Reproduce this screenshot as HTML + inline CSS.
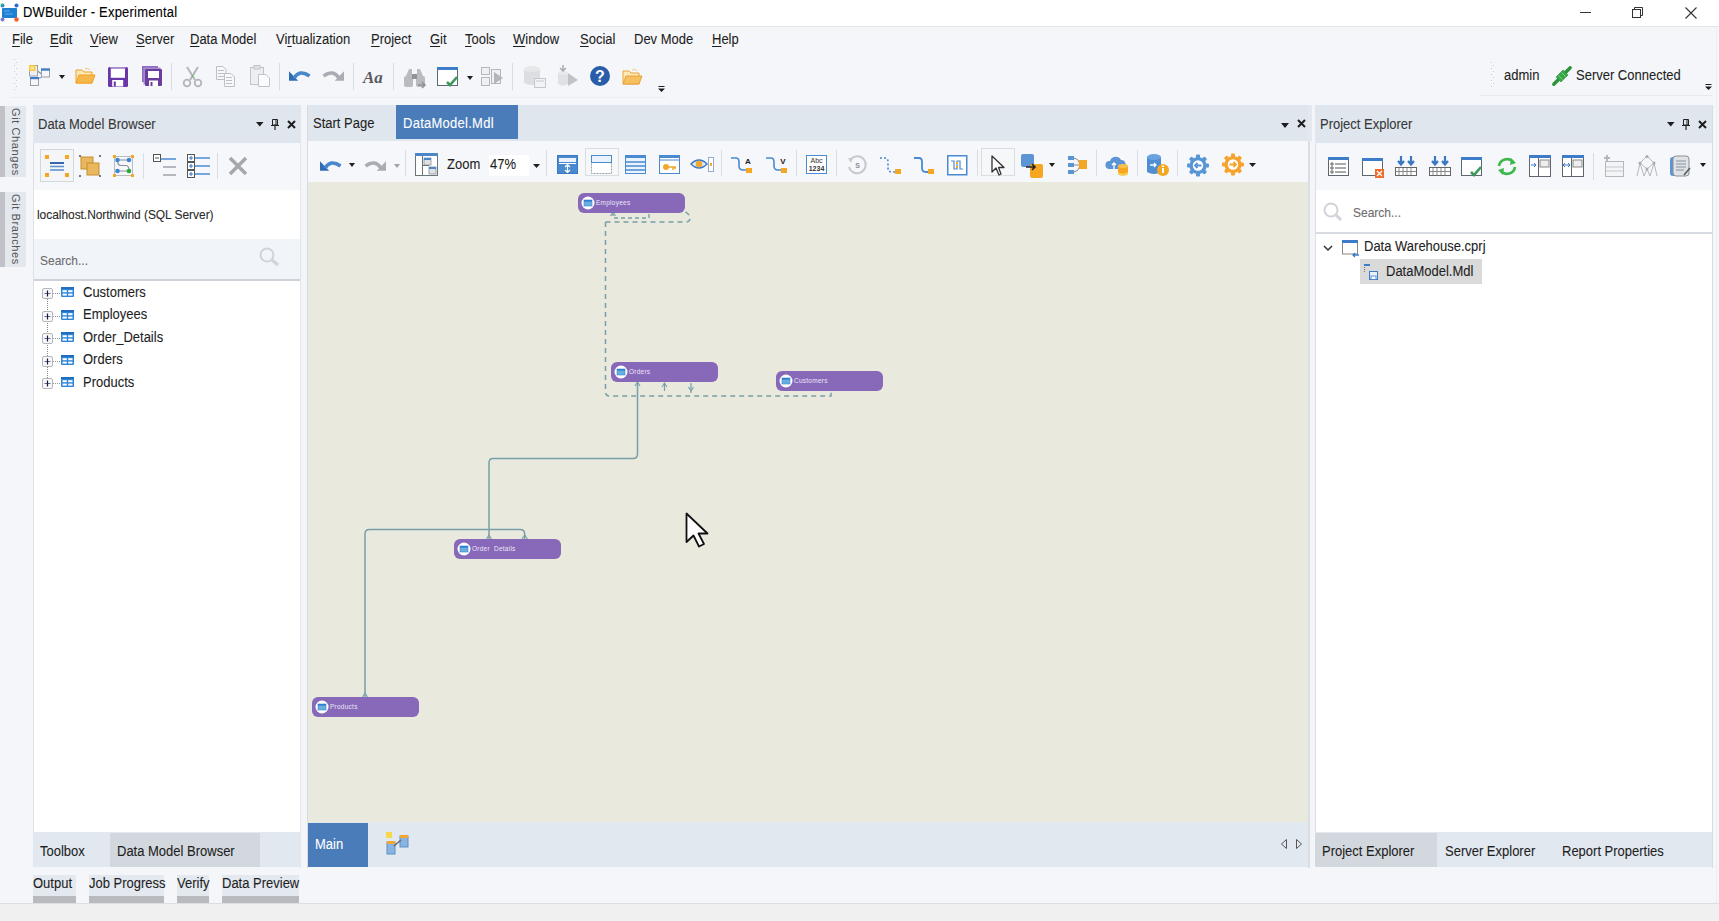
<!DOCTYPE html><html><head><meta charset="utf-8"><style>
html,body{margin:0;padding:0;}
body{width:1719px;height:921px;overflow:hidden;position:relative;background:#f5f6f8;font-family:"Liberation Sans", sans-serif;}
.a{position:absolute;}
.t{position:absolute;white-space:nowrap;line-height:1;-webkit-text-stroke:0.1px currentColor;}
svg{position:absolute;overflow:visible;}
</style></head><body>
<div class="a" style="left:0px;top:0px;width:1719px;height:26px;background:#ffffff;"></div>
<div class="a" style="left:0px;top:26px;width:1719px;height:1px;background:#e3e6ea;"></div>
<svg style="left:0px;top:3px" width="20" height="20" viewBox="0 0 20 20"><rect x="2" y="5" width="15" height="10" rx="1" fill="#1f7fd0"/><path d="M4 8H10M5 11H13" stroke="#5fb0f0" stroke-width="1.2"/><circle cx="2.5" cy="2.5" r="2" fill="#2a8ad8"/><circle cx="2" cy="1.5" r="1" fill="#3c3"/><circle cx="16.5" cy="2.5" r="2" fill="#2a6ad8"/><circle cx="2.5" cy="16.5" r="2" fill="#7a7ad0"/><circle cx="16.5" cy="16.5" r="2.2" fill="#f06030"/></svg>
<div class="t" style="left:23px;top:4.73px;font-size:14.49px;color:#000;transform:scaleX(0.8969);transform-origin:0 0;letter-spacing:0.23px;">DWBuilder - Experimental</div>
<div class="a" style="left:1580px;top:12px;width:11px;height:1px;background:#333;"></div>
<svg style="left:1632px;top:7px" width="12" height="12" viewBox="0 0 12 12"><rect x="0.5" y="2.5" width="8" height="8" fill="none" stroke="#333"/><path d="M2.5 2.5V0.5H10.5V8.5H8.5" fill="none" stroke="#333"/></svg>
<svg style="left:1685px;top:7px" width="12" height="12" viewBox="0 0 12 12"><path d="M0.5 0.5L11.5 11.5M11.5 0.5L0.5 11.5" stroke="#333" stroke-width="1.1"/></svg>
<div class="a" style="left:0px;top:27px;width:1719px;height:75px;background:#f5f6f9;"></div>
<div class="t" style="left:12px;top:31.73px;font-size:14.49px;color:#1e1e1e;transform:scaleX(0.8969);transform-origin:0 0;"><u style="text-decoration-thickness:1px;text-underline-offset:2px">F</u>ile</div>
<div class="t" style="left:50px;top:31.73px;font-size:14.49px;color:#1e1e1e;transform:scaleX(0.8969);transform-origin:0 0;"><u style="text-decoration-thickness:1px;text-underline-offset:2px">E</u>dit</div>
<div class="t" style="left:90px;top:31.73px;font-size:14.49px;color:#1e1e1e;transform:scaleX(0.8969);transform-origin:0 0;"><u style="text-decoration-thickness:1px;text-underline-offset:2px">V</u>iew</div>
<div class="t" style="left:136px;top:31.73px;font-size:14.49px;color:#1e1e1e;transform:scaleX(0.8969);transform-origin:0 0;"><u style="text-decoration-thickness:1px;text-underline-offset:2px">S</u>erver</div>
<div class="t" style="left:190px;top:31.73px;font-size:14.49px;color:#1e1e1e;transform:scaleX(0.8969);transform-origin:0 0;"><u style="text-decoration-thickness:1px;text-underline-offset:2px">D</u>ata Model</div>
<div class="t" style="left:276px;top:31.73px;font-size:14.49px;color:#1e1e1e;transform:scaleX(0.8969);transform-origin:0 0;">Vi<u style="text-decoration-thickness:1px;text-underline-offset:2px">r</u>tualization</div>
<div class="t" style="left:371px;top:31.73px;font-size:14.49px;color:#1e1e1e;transform:scaleX(0.8969);transform-origin:0 0;"><u style="text-decoration-thickness:1px;text-underline-offset:2px">P</u>roject</div>
<div class="t" style="left:430px;top:31.73px;font-size:14.49px;color:#1e1e1e;transform:scaleX(0.8969);transform-origin:0 0;"><u style="text-decoration-thickness:1px;text-underline-offset:2px">G</u>it</div>
<div class="t" style="left:465px;top:31.73px;font-size:14.49px;color:#1e1e1e;transform:scaleX(0.8969);transform-origin:0 0;"><u style="text-decoration-thickness:1px;text-underline-offset:2px">T</u>ools</div>
<div class="t" style="left:513px;top:31.73px;font-size:14.49px;color:#1e1e1e;transform:scaleX(0.8969);transform-origin:0 0;"><u style="text-decoration-thickness:1px;text-underline-offset:2px">W</u>indow</div>
<div class="t" style="left:580px;top:31.73px;font-size:14.49px;color:#1e1e1e;transform:scaleX(0.8969);transform-origin:0 0;"><u style="text-decoration-thickness:1px;text-underline-offset:2px">S</u>ocial</div>
<div class="t" style="left:634px;top:31.73px;font-size:14.49px;color:#1e1e1e;transform:scaleX(0.8969);transform-origin:0 0;">Dev Mode</div>
<div class="t" style="left:712px;top:31.73px;font-size:14.49px;color:#1e1e1e;transform:scaleX(0.8969);transform-origin:0 0;"><u style="text-decoration-thickness:1px;text-underline-offset:2px">H</u>elp</div>
<svg style="left:13px;top:59px" width="6" height="33" viewBox="0 0 6 33"><rect x="1" y="0" width="1" height="1" fill="#c8ccd2"/><rect x="3" y="3" width="1" height="1" fill="#c8ccd2"/><rect x="1" y="6" width="1" height="1" fill="#c8ccd2"/><rect x="3" y="9" width="1" height="1" fill="#c8ccd2"/><rect x="1" y="12" width="1" height="1" fill="#c8ccd2"/><rect x="3" y="15" width="1" height="1" fill="#c8ccd2"/><rect x="1" y="18" width="1" height="1" fill="#c8ccd2"/><rect x="3" y="21" width="1" height="1" fill="#c8ccd2"/><rect x="1" y="24" width="1" height="1" fill="#c8ccd2"/><rect x="3" y="27" width="1" height="1" fill="#c8ccd2"/><rect x="1" y="30" width="1" height="1" fill="#c8ccd2"/></svg>
<svg style="left:29px;top:65px" width="22" height="22" viewBox="0 0 22 22"><path d="M6 4L12.5 9M12.5 12.5L8.5 13.5" stroke="#8a8fa8" stroke-width="1.2"/><rect x="0.5" y="0.5" width="8" height="10.5" fill="#eef0f3" stroke="#9aa0a8"/><rect x="0" y="0" width="6.5" height="6" fill="#f5c842"/><rect x="1.5" y="1.5" width="3.5" height="3" fill="#fbe89a"/><rect x="12.5" y="4" width="8" height="8" fill="#f4f6f9" stroke="#9aa0a8"/><rect x="12" y="3.5" width="9" height="2.2" fill="#3d7cc9"/><rect x="1.5" y="12.5" width="8" height="8" fill="#f4f6f9" stroke="#9aa0a8"/><rect x="1" y="12" width="9" height="2.2" fill="#3d7cc9"/></svg>
<svg style="left:59px;top:75px" width="6" height="4" viewBox="0 0 6 4"><path d="M0 0H6L3.0 4Z" fill="#1e1e1e"/></svg>
<svg style="left:75px;top:67px" width="20" height="18" viewBox="0 0 20 18"><path d="M1 3H7L9 5H17V16H1Z" fill="#fde9b8" stroke="#f0a020" stroke-width="1"/><path d="M10 2Q13 0 15 3" stroke="#f3c77a" fill="none"/><path d="M1 16L4 8H20L17 16Z" fill="#f6b84a" stroke="#f0a020"/></svg>
<svg style="left:108px;top:67px" width="20" height="20" viewBox="0 0 20 20"><rect x="0" y="0" width="20" height="20" rx="1.5" fill="#6b36a6"/><rect x="2" y="0" width="16" height="1" fill="#a58ad0"/><rect x="2.8" y="1.5" width="14.2" height="9.3" fill="#fff"/><rect x="4.2" y="13" width="11" height="6.5" fill="#fff"/><rect x="5.8" y="14.5" width="2" height="5" fill="#6b36a6"/></svg>
<svg style="left:142px;top:66px" width="20" height="20" viewBox="0 0 20 20"><rect x="0" y="0" width="16" height="16" fill="#8e6cc0"/><rect x="1.5" y="1.5" width="17" height="17" fill="#a58ad0"/><rect x="3" y="3" width="17" height="17" rx="1" fill="#6a3d9e"/><rect x="6" y="5" width="11" height="7" fill="#fff"/><rect x="7" y="14.5" width="9" height="5.5" fill="#fff"/><rect x="8.5" y="16" width="2" height="4" fill="#6a3d9e"/></svg>
<div class="a" style="left:171px;top:63px;width:1px;height:27px;background:#d9dce1;"></div>
<svg style="left:182px;top:66px" width="22" height="22" viewBox="0 0 22 22"><path d="M5 1L13 14M16 1L8 14" stroke="#b2b6bb" stroke-width="2" fill="none"/><circle cx="5" cy="17" r="3.3" fill="none" stroke="#b2b6bb" stroke-width="1.8"/><circle cx="16" cy="17" r="3.3" fill="none" stroke="#b2b6bb" stroke-width="1.8"/><circle cx="10.5" cy="10" r="0.8" fill="#3c3"/></svg>
<svg style="left:216px;top:66px" width="20" height="22" viewBox="0 0 20 22"><path d="M0.5 0.5H7L10 3.5V13.5H0.5Z" fill="#f7f8fa" stroke="#bcc0c5"/><path d="M2 4.5H8M2 7.5H8M2 10.5H8" stroke="#bcc0c5"/><path d="M8.5 7.5H15L18.5 11V20.5H8.5Z" fill="#f7f8fa" stroke="#bcc0c5"/><path d="M10 11.5H16M10 14.5H16M10 17.5H16" stroke="#bcc0c5"/></svg>
<svg style="left:250px;top:65px" width="20" height="22" viewBox="0 0 20 22"><rect x="0.5" y="2.5" width="13" height="17" fill="#eceef1" stroke="#c0c4c8"/><rect x="4" y="0.5" width="6" height="3.5" fill="#dfe2e6" stroke="#c0c4c8"/><path d="M8.5 9.5H16L19.5 13V21.5H8.5Z" fill="#fafbfc" stroke="#c0c4c8"/></svg>
<div class="a" style="left:279px;top:63px;width:1px;height:27px;background:#d9dce1;"></div>
<svg style="left:288px;top:67px" width="22" height="15" viewBox="0 0 22 15"><path d="M1 4.2V13.8H10.2Z" fill="#2f6db5"/><path d="M6 11Q12 2 21.5 9" fill="none" stroke="#4a86cc" stroke-width="3.6"/></svg>
<svg style="left:323px;top:67px" width="22" height="15" viewBox="0 0 22 15"><g transform="translate(22,0) scale(-1,1)"><path d="M1 4.2V13.8H10.2Z" fill="#a9adb3"/><path d="M6 11Q12 2 21.5 9" fill="none" stroke="#a9adb3" stroke-width="3.6"/></g></svg>
<div class="a" style="left:353px;top:63px;width:1px;height:27px;background:#d9dce1;"></div>
<svg style="left:363px;top:70px" width="24" height="16" viewBox="0 0 24 16"><text x="0" y="13" font-family="Liberation Serif" font-style="italic" font-weight="bold" font-size="17" fill="#5a5a62">Aa</text></svg>
<div class="a" style="left:393px;top:63px;width:1px;height:27px;background:#d9dce1;"></div>
<svg style="left:404px;top:68px" width="21" height="20" viewBox="0 0 21 20"><path d="M2 8L5 1H8V10Z" fill="#b8bbc0"/><path d="M19 8L16 1H13V10Z" fill="#b8bbc0"/><rect x="0" y="8" width="9" height="11" rx="2" fill="#b8bbc0"/><rect x="12" y="8" width="9" height="11" rx="2" fill="#b8bbc0"/><rect x="8" y="6" width="5" height="5" fill="#8f9398"/><path d="M14 17H21M18 14L21 17L18 20" stroke="#8f9398" stroke-width="1.5" fill="none"/></svg>
<svg style="left:437px;top:67px" width="21" height="20" viewBox="0 0 21 20"><rect x="0.5" y="0.5" width="20" height="18" fill="#fff" stroke="#5f6670"/><rect x="0" y="0" width="21" height="3" fill="#3d7cc9"/><path d="M10 15L13 18L20 10" stroke="#3a9a5a" stroke-width="2.6" fill="none"/></svg>
<svg style="left:467px;top:76px" width="6" height="4" viewBox="0 0 6 4"><path d="M0 0H6L3.0 4Z" fill="#1e1e1e"/></svg>
<svg style="left:481px;top:67px" width="22" height="20" viewBox="0 0 22 20"><rect x="0.5" y="0.5" width="8" height="7" fill="#eef0f3" stroke="#b3b7bc"/><rect x="0.5" y="10.5" width="8" height="8" fill="#eef0f3" stroke="#b3b7bc"/><rect x="10.5" y="2.5" width="9" height="14" fill="#eef0f3" stroke="#b3b7bc"/><path d="M13 5L22 11L13 17Z" fill="#b3b7bc"/></svg>
<div class="a" style="left:512px;top:63px;width:1px;height:27px;background:#d9dce1;"></div>
<svg style="left:524px;top:66px" width="22" height="22" viewBox="0 0 22 22"><path d="M0 3V17Q8 21 16 17V3Z" fill="#dcdee1"/><ellipse cx="8" cy="3" rx="8" ry="3" fill="#e6e8ea"/><rect x="10.5" y="12.5" width="11" height="9" fill="#f2f3f5" stroke="#c4c7cb"/><path d="M12 15H20" stroke="#c4c7cb"/></svg>
<svg style="left:557px;top:65px" width="22" height="22" viewBox="0 0 22 22"><path d="M1 8V19Q6 22 11 19V8Z" fill="#dfe1e4"/><ellipse cx="6" cy="8" rx="5" ry="2" fill="#e8e9eb"/><path d="M6 0V6M3 3L6 6L9 3" stroke="#a7abb0" stroke-width="1.5" fill="none"/><path d="M11 8L21 15L11 21Z" fill="#bfc2c6"/></svg>
<svg style="left:590px;top:66px" width="20" height="20" viewBox="0 0 20 20"><circle cx="10" cy="10" r="10" fill="#2a5da8"/><text x="10" y="16" text-anchor="middle" font-family="Liberation Sans" font-weight="bold" font-size="16" fill="#fff">?</text></svg>
<svg style="left:622px;top:68px" width="22" height="17" viewBox="0 0 22 17"><path d="M1 3H7L9 5H17V16H1Z" fill="#fde9b8" stroke="#eaa23a" stroke-width="1"/><path d="M10 2Q13 0 15 3" stroke="#f3c77a" fill="none"/><path d="M1 16L4 8H20L17 16Z" fill="#f6c060" stroke="#eaa23a"/></svg>
<svg style="left:658px;top:86px" width="7" height="6" viewBox="0 0 7 6"><path d="M0.5 0.5H6.5" stroke="#1e1e1e" stroke-width="1"/><path d="M0 2.5H7L3.5 6Z" fill="#1e1e1e"/></svg>
<div class="a" style="left:10px;top:97px;width:656px;height:1px;background:#eaedf1;"></div>
<svg style="left:1490px;top:62px" width="6" height="28" viewBox="0 0 6 28"><rect x="1" y="0" width="1" height="1" fill="#c8ccd2"/><rect x="3" y="3" width="1" height="1" fill="#c8ccd2"/><rect x="1" y="6" width="1" height="1" fill="#c8ccd2"/><rect x="3" y="9" width="1" height="1" fill="#c8ccd2"/><rect x="1" y="12" width="1" height="1" fill="#c8ccd2"/><rect x="3" y="15" width="1" height="1" fill="#c8ccd2"/><rect x="1" y="18" width="1" height="1" fill="#c8ccd2"/><rect x="3" y="21" width="1" height="1" fill="#c8ccd2"/><rect x="1" y="24" width="1" height="1" fill="#c8ccd2"/></svg>
<div class="t" style="left:1504px;top:67.73px;font-size:14.49px;color:#1e1e1e;transform:scaleX(0.8969);transform-origin:0 0;">admin</div>
<svg style="left:1552px;top:66px" width="20" height="20" viewBox="0 0 20 20"><path d="M1.8 18.2L18.2 1.8" stroke="#2c9438" stroke-width="3.4" stroke-linecap="round"/><path d="M11.1 3.9L16 8.9L8.9 16L4 11.1Z" fill="#3aa846" stroke="#2a8a35" stroke-width="0.6"/><path d="M6.5 9.5L10.5 13.5M9.5 6.5L13.5 10.5" stroke="#7fd08a" stroke-width="0.9"/></svg>
<div class="t" style="left:1576px;top:67.73px;font-size:14.49px;color:#1e1e1e;transform:scaleX(0.8969);transform-origin:0 0;">Server Connected</div>
<svg style="left:1705px;top:84px" width="7" height="6" viewBox="0 0 7 6"><path d="M0.5 0.5H6.5" stroke="#1e1e1e" stroke-width="1"/><path d="M0 2.5H7L3.5 6Z" fill="#1e1e1e"/></svg>
<div class="a" style="left:1480px;top:95px;width:232px;height:1px;background:#e6e9ed;"></div>
<div class="a" style="left:0px;top:102px;width:1719px;height:801px;background:#f5f6f9;"></div>
<div class="a" style="left:0px;top:106px;width:5px;height:71px;background:#c0c2c7;"></div>
<div class="a" style="left:5px;top:106px;width:21px;height:71px;background:#e3e8ef;"></div>
<div class="a" style="left:0px;top:192px;width:5px;height:75px;background:#c0c2c7;"></div>
<div class="a" style="left:5px;top:192px;width:21px;height:75px;background:#e3e8ef;"></div>
<div class="t" style="left:10px;top:107.50px;font-size:11.00px;color:#555;writing-mode:vertical-rl;-webkit-text-stroke:0;letter-spacing:0.6px;">Git Changes</div>
<div class="t" style="left:10px;top:193.50px;font-size:11.00px;color:#555;writing-mode:vertical-rl;-webkit-text-stroke:0;letter-spacing:0.6px;">Git Branches</div>
<div class="a" style="left:33px;top:105px;width:267px;height:38px;background:#e0e6ee;"></div>
<div class="t" style="left:38px;top:116.73px;font-size:14.49px;color:#383838;transform:scaleX(0.8969);transform-origin:0 0;-webkit-text-stroke:0.1px currentColor;">Data Model Browser</div>
<svg style="left:255.5px;top:122px" width="8" height="5" viewBox="0 0 8 5"><path d="M0 0H7.5L3.75 4.5Z" fill="#1e1e1e"/></svg>
<svg style="left:271px;top:118.5px" width="8" height="12" viewBox="0 0 8 12"><path d="M1.5 0.5H6.5V6H1.5Z" fill="none" stroke="#222"/><path d="M0 6.5H8M4 7V11" stroke="#222" stroke-width="1.2"/><path d="M5 1V6" stroke="#222"/></svg>
<svg style="left:287px;top:120px" width="9" height="9" viewBox="0 0 9 9"><path d="M1 1L8 8M8 1L1 8" stroke="#1e1e1e" stroke-width="2"/></svg>
<div class="a" style="left:33px;top:143px;width:267px;height:47px;background:#f5f7fa;"></div>
<div class="a" style="left:40px;top:149px;width:34px;height:33px;background:#f3f5f7;border:1px solid #d3d7dc;box-sizing:border-box;"></div>
<svg style="left:45px;top:155px" width="24" height="22" viewBox="0 0 24 22"><rect x="0" y="0" width="4" height="4" fill="#f5a623"/><rect x="20" y="0" width="4" height="4" fill="#f5a623"/><rect x="0" y="18" width="4" height="4" fill="#f5a623"/><rect x="20" y="18" width="4" height="4" fill="#f5a623"/><path d="M5 8H19" stroke="#3a66b0" stroke-width="2"/><path d="M5 11.5H19M5 15H19" stroke="#5a8fd0" stroke-width="1.5"/></svg>
<svg style="left:80px;top:156px" width="20" height="20" viewBox="0 0 20 20"><rect x="1" y="1" width="12" height="12" fill="#e9b760" stroke="#c98f2a"/><rect x="7" y="7" width="12" height="12" fill="#e9b760" stroke="#c98f2a"/><rect x="-1" y="-1" width="2" height="2" fill="#777"/><rect x="19" y="-1" width="2" height="2" fill="#777"/><rect x="-1" y="19" width="2" height="2" fill="#777"/><rect x="19" y="19" width="2" height="2" fill="#777"/></svg>
<svg style="left:113px;top:155px" width="21" height="22" viewBox="0 0 21 22"><rect x="1.5" y="1.5" width="18" height="19" fill="none" stroke="#b9bcc2"/><rect x="0" y="0" width="3" height="3" fill="#f5a623"/><rect x="18" y="0" width="3" height="3" fill="#f5a623"/><rect x="0" y="19" width="3" height="3" fill="#f5a623"/><rect x="18" y="19" width="3" height="3" fill="#f5a623"/><path d="M5 5H16M4.5 5Q4.5 10.5 8 10.5H13Q16 10.5 16 16M5 16H16" stroke="#8a8f96" stroke-width="1.2" fill="none"/><circle cx="4.5" cy="5" r="2.3" fill="#3d86d6"/><circle cx="16" cy="5" r="2.3" fill="#3d86d6"/><circle cx="4.5" cy="16" r="2.3" fill="#3d86d6"/><circle cx="16" cy="16" r="2.3" fill="#2fa33f"/></svg>
<div class="a" style="left:143px;top:153px;width:1px;height:26px;background:#d9dce1;"></div>
<svg style="left:153px;top:154px" width="24" height="24" viewBox="0 0 24 24"><rect x="0.5" y="0.5" width="7" height="7" fill="#fff" stroke="#555"/><path d="M2 4H6" stroke="#555"/><path d="M8 5H23" stroke="#4a8ad0" stroke-width="1.5"/><path d="M10 13H23M10 21H23" stroke="#a0a4aa" stroke-width="1.5"/></svg>
<svg style="left:187px;top:154px" width="24" height="24" viewBox="0 0 24 24"><rect x="0.5" y="0.5" width="7" height="7" fill="#fff" stroke="#555"/><path d="M2 4H6M4 2V6" stroke="#3a70c0"/><path d="M8 4H23" stroke="#4a8ad0" stroke-width="1.5"/><rect x="0.5" y="8.5" width="7" height="7" fill="#fff" stroke="#555"/><path d="M2 12H6M4 10V14" stroke="#3a70c0"/><path d="M8 12H23" stroke="#4a8ad0" stroke-width="1.5"/><rect x="0.5" y="16.5" width="7" height="7" fill="#fff" stroke="#555"/><path d="M2 20H6M4 18V22" stroke="#3a70c0"/><path d="M8 20H23" stroke="#4a8ad0" stroke-width="1.5"/></svg>
<div class="a" style="left:217px;top:153px;width:1px;height:26px;background:#d9dce1;"></div>
<svg style="left:228px;top:156px" width="20" height="20" viewBox="0 0 20 20"><path d="M2 2L18 18M18 2L2 18" stroke="#a4a7ab" stroke-width="3.5"/></svg>
<div class="a" style="left:33px;top:190px;width:267px;height:50px;background:#ffffff;"></div>
<div class="t" style="left:37px;top:207.83px;font-size:13.38px;color:#2a2a2a;transform:scaleX(0.8969);transform-origin:0 0;letter-spacing:-0.06px;">localhost.Northwind (SQL Server)</div>
<div class="a" style="left:33px;top:239px;width:267px;height:40px;background:#f1f4f8;"></div>
<div class="t" style="left:40px;top:253.83px;font-size:13.38px;color:#6d6d6d;transform:scaleX(0.8969);transform-origin:0 0;">Search...</div>
<svg style="left:259px;top:247px" width="24" height="20" viewBox="0 0 24 20"><circle cx="8" cy="8" r="6.5" fill="none" stroke="#d0d3d7" stroke-width="2"/><path d="M13 13L19 18" stroke="#d0d3d7" stroke-width="3"/></svg>
<div class="a" style="left:33px;top:279px;width:267px;height:2px;background:#cfd3d9;"></div>
<div class="a" style="left:33px;top:281px;width:267px;height:551px;background:#ffffff;"></div>
<svg style="left:47px;top:299px" width="1" height="90" viewBox="0 0 1 90"><path d="M0.5 0V90" stroke="#888" stroke-dasharray="1 1"/></svg>
<svg style="left:42px;top:288.3px" width="11" height="11" viewBox="0 0 11 11"><rect x="0.5" y="0.5" width="10" height="10" rx="1.5" fill="#f8f8fa" stroke="#b4b6ba"/><path d="M2.5 5.5H8.5" stroke="#5a6a9a"/><path d="M5.5 2.5V8.5" stroke="#1a1a3a" stroke-width="1.2"/></svg>
<svg style="left:53px;top:293.3px" width="8" height="1" viewBox="0 0 8 1"><path d="M0 0.5H8" stroke="#999" stroke-dasharray="1 1"/></svg>
<svg style="left:61px;top:287.3px" width="13" height="10" viewBox="0 0 13 10"><rect x="0" y="0" width="13" height="10" rx="1" fill="#2f86d6"/><rect x="0" y="0" width="13" height="2" fill="#1f6ec0"/><rect x="1.5" y="3.2" width="4.3" height="2" fill="#fff"/><rect x="7.2" y="3.2" width="4.3" height="2" fill="#fff"/><rect x="1.5" y="6.6" width="4.3" height="2" fill="#fff"/><rect x="7.2" y="6.6" width="4.3" height="2" fill="#fff"/></svg>
<div class="t" style="left:83px;top:285.03px;font-size:14.49px;color:#1e1e1e;transform:scaleX(0.8969);transform-origin:0 0;">Customers</div>
<svg style="left:42px;top:310.75px" width="11" height="11" viewBox="0 0 11 11"><rect x="0.5" y="0.5" width="10" height="10" rx="1.5" fill="#f8f8fa" stroke="#b4b6ba"/><path d="M2.5 5.5H8.5" stroke="#5a6a9a"/><path d="M5.5 2.5V8.5" stroke="#1a1a3a" stroke-width="1.2"/></svg>
<svg style="left:53px;top:315.75px" width="8" height="1" viewBox="0 0 8 1"><path d="M0 0.5H8" stroke="#999" stroke-dasharray="1 1"/></svg>
<svg style="left:61px;top:309.75px" width="13" height="10" viewBox="0 0 13 10"><rect x="0" y="0" width="13" height="10" rx="1" fill="#2f86d6"/><rect x="0" y="0" width="13" height="2" fill="#1f6ec0"/><rect x="1.5" y="3.2" width="4.3" height="2" fill="#fff"/><rect x="7.2" y="3.2" width="4.3" height="2" fill="#fff"/><rect x="1.5" y="6.6" width="4.3" height="2" fill="#fff"/><rect x="7.2" y="6.6" width="4.3" height="2" fill="#fff"/></svg>
<div class="t" style="left:83px;top:307.48px;font-size:14.49px;color:#1e1e1e;transform:scaleX(0.8969);transform-origin:0 0;">Employees</div>
<svg style="left:42px;top:333.2px" width="11" height="11" viewBox="0 0 11 11"><rect x="0.5" y="0.5" width="10" height="10" rx="1.5" fill="#f8f8fa" stroke="#b4b6ba"/><path d="M2.5 5.5H8.5" stroke="#5a6a9a"/><path d="M5.5 2.5V8.5" stroke="#1a1a3a" stroke-width="1.2"/></svg>
<svg style="left:53px;top:338.2px" width="8" height="1" viewBox="0 0 8 1"><path d="M0 0.5H8" stroke="#999" stroke-dasharray="1 1"/></svg>
<svg style="left:61px;top:332.2px" width="13" height="10" viewBox="0 0 13 10"><rect x="0" y="0" width="13" height="10" rx="1" fill="#2f86d6"/><rect x="0" y="0" width="13" height="2" fill="#1f6ec0"/><rect x="1.5" y="3.2" width="4.3" height="2" fill="#fff"/><rect x="7.2" y="3.2" width="4.3" height="2" fill="#fff"/><rect x="1.5" y="6.6" width="4.3" height="2" fill="#fff"/><rect x="7.2" y="6.6" width="4.3" height="2" fill="#fff"/></svg>
<div class="t" style="left:83px;top:329.93px;font-size:14.49px;color:#1e1e1e;transform:scaleX(0.8969);transform-origin:0 0;">Order_Details</div>
<svg style="left:42px;top:355.65px" width="11" height="11" viewBox="0 0 11 11"><rect x="0.5" y="0.5" width="10" height="10" rx="1.5" fill="#f8f8fa" stroke="#b4b6ba"/><path d="M2.5 5.5H8.5" stroke="#5a6a9a"/><path d="M5.5 2.5V8.5" stroke="#1a1a3a" stroke-width="1.2"/></svg>
<svg style="left:53px;top:360.65px" width="8" height="1" viewBox="0 0 8 1"><path d="M0 0.5H8" stroke="#999" stroke-dasharray="1 1"/></svg>
<svg style="left:61px;top:354.65px" width="13" height="10" viewBox="0 0 13 10"><rect x="0" y="0" width="13" height="10" rx="1" fill="#2f86d6"/><rect x="0" y="0" width="13" height="2" fill="#1f6ec0"/><rect x="1.5" y="3.2" width="4.3" height="2" fill="#fff"/><rect x="7.2" y="3.2" width="4.3" height="2" fill="#fff"/><rect x="1.5" y="6.6" width="4.3" height="2" fill="#fff"/><rect x="7.2" y="6.6" width="4.3" height="2" fill="#fff"/></svg>
<div class="t" style="left:83px;top:352.38px;font-size:14.49px;color:#1e1e1e;transform:scaleX(0.8969);transform-origin:0 0;">Orders</div>
<svg style="left:42px;top:378.1px" width="11" height="11" viewBox="0 0 11 11"><rect x="0.5" y="0.5" width="10" height="10" rx="1.5" fill="#f8f8fa" stroke="#b4b6ba"/><path d="M2.5 5.5H8.5" stroke="#5a6a9a"/><path d="M5.5 2.5V8.5" stroke="#1a1a3a" stroke-width="1.2"/></svg>
<svg style="left:53px;top:383.1px" width="8" height="1" viewBox="0 0 8 1"><path d="M0 0.5H8" stroke="#999" stroke-dasharray="1 1"/></svg>
<svg style="left:61px;top:377.1px" width="13" height="10" viewBox="0 0 13 10"><rect x="0" y="0" width="13" height="10" rx="1" fill="#2f86d6"/><rect x="0" y="0" width="13" height="2" fill="#1f6ec0"/><rect x="1.5" y="3.2" width="4.3" height="2" fill="#fff"/><rect x="7.2" y="3.2" width="4.3" height="2" fill="#fff"/><rect x="1.5" y="6.6" width="4.3" height="2" fill="#fff"/><rect x="7.2" y="6.6" width="4.3" height="2" fill="#fff"/></svg>
<div class="t" style="left:83px;top:374.83px;font-size:14.49px;color:#1e1e1e;transform:scaleX(0.8969);transform-origin:0 0;">Products</div>
<div class="a" style="left:33px;top:143px;width:1px;height:689px;background:#dde1e6;"></div>
<div class="a" style="left:33px;top:832px;width:267px;height:35px;background:#e2e8f0;"></div>
<div class="a" style="left:110px;top:833px;width:150px;height:34px;background:#d3d8de;"></div>
<div class="t" style="left:40px;top:843.73px;font-size:14.49px;color:#1e1e1e;transform:scaleX(0.8969);transform-origin:0 0;">Toolbox</div>
<div class="t" style="left:117px;top:843.73px;font-size:14.49px;color:#1e1e1e;transform:scaleX(0.8969);transform-origin:0 0;">Data Model Browser</div>
<div class="a" style="left:33px;top:875px;width:43px;height:21px;background:#e4e9ef;"></div>
<div class="a" style="left:33px;top:896px;width:43px;height:7px;background:#b8babf;"></div>
<div class="t" style="left:33px;top:875.73px;font-size:14.49px;color:#1e1e1e;transform:scaleX(0.8969);transform-origin:0 0;">Output</div>
<div class="a" style="left:89px;top:875px;width:75px;height:21px;background:#e4e9ef;"></div>
<div class="a" style="left:89px;top:896px;width:75px;height:7px;background:#b8babf;"></div>
<div class="t" style="left:89px;top:875.73px;font-size:14.49px;color:#1e1e1e;transform:scaleX(0.8969);transform-origin:0 0;">Job Progress</div>
<div class="a" style="left:177px;top:875px;width:32px;height:21px;background:#e4e9ef;"></div>
<div class="a" style="left:177px;top:896px;width:32px;height:7px;background:#b8babf;"></div>
<div class="t" style="left:177px;top:875.73px;font-size:14.49px;color:#1e1e1e;transform:scaleX(0.8969);transform-origin:0 0;">Verify</div>
<div class="a" style="left:222px;top:875px;width:77px;height:21px;background:#e4e9ef;"></div>
<div class="a" style="left:222px;top:896px;width:77px;height:7px;background:#b8babf;"></div>
<div class="t" style="left:222px;top:875.73px;font-size:14.49px;color:#1e1e1e;transform:scaleX(0.8969);transform-origin:0 0;">Data Preview</div>
<div class="a" style="left:0px;top:903px;width:1719px;height:18px;background:#f0f0f0;"></div>
<div class="a" style="left:0px;top:903px;width:1719px;height:1px;background:#dedede;"></div>
<div class="a" style="left:300px;top:105px;width:8px;height:763px;background:#f3f5f8;"></div>
<div class="a" style="left:300px;top:105px;width:1px;height:763px;background:#e1e5ea;"></div>
<div class="a" style="left:307px;top:105px;width:1px;height:763px;background:#d6dade;"></div>
<div class="a" style="left:308px;top:105px;width:1000px;height:36px;background:#e0e6ee;"></div>
<div class="t" style="left:313px;top:115.73px;font-size:14.49px;color:#1e1e1e;transform:scaleX(0.8969);transform-origin:0 0;">Start Page</div>
<div class="a" style="left:396px;top:105px;width:122px;height:34px;background:#4a7cba;"></div>
<div class="t" style="left:403px;top:115.73px;font-size:14.49px;color:#ffffff;transform:scaleX(0.8969);transform-origin:0 0;letter-spacing:0.3px;">DataModel.Mdl</div>
<svg style="left:1281px;top:123px" width="8" height="5" viewBox="0 0 8 5"><path d="M0 0H8L4.0 5Z" fill="#1e1e1e"/></svg>
<svg style="left:1297px;top:119px" width="9" height="9" viewBox="0 0 9 9"><path d="M1 1L8 8M8 1L1 8" stroke="#1e1e1e" stroke-width="2"/></svg>
<div class="a" style="left:308px;top:141px;width:1000px;height:41px;background:#f5f7fa;"></div>
<svg style="left:319px;top:157px" width="22" height="14" viewBox="0 0 22 14"><path d="M1 4.2V13.8H10.2Z" fill="#2f6db5"/><path d="M6 11Q12 2 21.5 9" fill="none" stroke="#4a86cc" stroke-width="3.6"/></svg>
<svg style="left:349px;top:163px" width="6" height="4" viewBox="0 0 6 4"><path d="M0 0H6L3.0 4Z" fill="#1e1e1e"/></svg>
<svg style="left:365px;top:157px" width="22" height="14" viewBox="0 0 22 14"><g transform="translate(22,0) scale(-1,1)"><path d="M1 4.2V13.8H10.2Z" fill="#a9adb3"/><path d="M6 11Q12 2 21.5 9" fill="none" stroke="#a9adb3" stroke-width="3.6"/></g></svg>
<svg style="left:394px;top:164px" width="6" height="4" viewBox="0 0 6 4"><path d="M0 0H6L3.0 4Z" fill="#a0a4aa"/></svg>
<div class="a" style="left:405px;top:150px;width:1px;height:26px;background:#d9dce1;"></div>
<svg style="left:415px;top:153px" width="23" height="23" viewBox="0 0 23 23"><rect x="0.5" y="0.5" width="22" height="22" fill="#fff" stroke="#6e747c"/><rect x="0" y="0" width="23" height="3" fill="#4c86c8"/><path d="M7.5 3V23" stroke="#6e747c"/><rect x="9" y="5" width="7" height="7" fill="#dfe3e8" stroke="#8a8f96" stroke-width="0.8"/><rect x="9" y="5" width="7" height="2" fill="#4c86c8"/><rect x="14" y="14" width="7" height="7" fill="#dfe3e8" stroke="#8a8f96" stroke-width="0.8"/><rect x="14" y="14" width="7" height="2" fill="#4c86c8"/><path d="M7.5 12.5H14" stroke="#6e747c"/></svg>
<div class="t" style="left:447px;top:156.73px;font-size:14.49px;color:#1e1e1e;transform:scaleX(0.8969);transform-origin:0 0;">Zoom</div>
<div class="a" style="left:489px;top:155px;width:40px;height:21px;background:#ffffff;"></div>
<div class="t" style="left:490px;top:156.73px;font-size:14.49px;color:#1e1e1e;transform:scaleX(0.8969);transform-origin:0 0;">47%</div>
<svg style="left:533px;top:164px" width="7" height="4" viewBox="0 0 7 4"><path d="M0 0H7L3.5 4Z" fill="#1e1e1e"/></svg>
<div class="a" style="left:546px;top:150px;width:1px;height:26px;background:#d9dce1;"></div>
<svg style="left:557px;top:155px" width="21" height="19" viewBox="0 0 21 19"><rect x="0.5" y="0.5" width="20" height="18" fill="#4a8ad0" stroke="#3b78c2"/><rect x="2" y="3" width="17" height="4" fill="#eaf2fb"/><path d="M2 8.5H19" stroke="#fff"/><path d="M10.5 10V17M8 12L10.5 9.5L13 12M8 15L10.5 17.5L13 15" stroke="#fff" stroke-width="1.2" fill="none"/></svg>
<div class="a" style="left:585px;top:148px;width:34px;height:28px;background:#f6f7f9;border:1px solid #dadde2;box-sizing:border-box;"></div>
<svg style="left:591px;top:155px" width="21" height="19" viewBox="0 0 21 19"><rect x="0.5" y="0.5" width="20" height="18" fill="#fff" stroke="#9aa0a6" stroke-dasharray="2 1"/><rect x="0.5" y="0.5" width="20" height="7" fill="#eaf2fb" stroke="#4a8ad0"/></svg>
<svg style="left:625px;top:155px" width="21" height="19" viewBox="0 0 21 19"><rect x="0.5" y="0.5" width="20" height="18" fill="#eaf2fb" stroke="#4a8ad0"/><rect x="0" y="0" width="21" height="3" fill="#4a8ad0"/><path d="M1 7H20M1 11H20M1 15H20" stroke="#4a8ad0" stroke-width="1.5"/></svg>
<svg style="left:659px;top:155px" width="21" height="19" viewBox="0 0 21 19"><rect x="0.5" y="0.5" width="20" height="18" fill="#fff" stroke="#4a8ad0"/><rect x="0" y="0" width="21" height="3" fill="#4a8ad0"/><path d="M1 5H20" stroke="#4a8ad0"/><circle cx="7" cy="12" r="3" fill="#f0a830"/><path d="M9 12H17M14 12V15M16 12V14" stroke="#f0a830" stroke-width="1.5"/></svg>
<svg style="left:691px;top:157px" width="23" height="15" viewBox="0 0 23 15"><path d="M0 7Q8 -1 16 7Q8 15 0 7Z" fill="#dfeaf7" stroke="#3b78c2" stroke-width="1.5"/><circle cx="8" cy="7" r="3.3" fill="#f0a830"/><rect x="17.5" y="0.5" width="5" height="14" fill="#fff" stroke="#9ac"/><rect x="19" y="6" width="2" height="3" fill="#f0a830"/></svg>
<div class="a" style="left:721px;top:150px;width:1px;height:26px;background:#d9dce1;"></div>
<svg style="left:731px;top:156px" width="22" height="18" viewBox="0 0 22 18"><path d="M0 2H5Q8 2 8 6V10Q8 14 12 14H17" stroke="#4a8ad0" stroke-width="1.6" fill="none"/><rect x="15" y="12" width="6" height="5" fill="#f5a623"/><text x="17" y="8" text-anchor="middle" font-family="Liberation Sans" font-weight="bold" font-size="8" fill="#222">A</text></svg>
<svg style="left:766px;top:156px" width="22" height="18" viewBox="0 0 22 18"><path d="M0 2H5Q8 2 8 6V10Q8 14 12 14H17" stroke="#4a8ad0" stroke-width="1.6" fill="none"/><rect x="15" y="12" width="6" height="5" fill="#f5a623"/><text x="17" y="8" text-anchor="middle" font-family="Liberation Sans" font-weight="bold" font-size="8" fill="#222">V</text></svg>
<div class="a" style="left:796px;top:150px;width:1px;height:26px;background:#d9dce1;"></div>
<svg style="left:806px;top:155px" width="21" height="19" viewBox="0 0 21 19"><rect x="0.5" y="0.5" width="20" height="18" fill="#fff" stroke="#4a8ad0"/><text x="10.5" y="8" text-anchor="middle" font-family="Liberation Sans" font-size="7" fill="#333">Abc</text><text x="10.5" y="15.5" text-anchor="middle" font-family="Liberation Sans" font-weight="bold" font-size="7" fill="#333">1234</text></svg>
<div class="a" style="left:836px;top:150px;width:1px;height:26px;background:#d9dce1;"></div>
<svg style="left:847px;top:155px" width="21" height="20" viewBox="0 0 21 20"><path d="M4 4A8.5 8.5 0 1 1 2 12" stroke="#c6c9cd" stroke-width="2" fill="none"/><path d="M1 3L6 3L4 8Z" fill="#c6c9cd"/><text x="10.5" y="13" text-anchor="middle" font-family="Liberation Sans" font-size="7" font-weight="bold" fill="#8a8e93">S</text></svg>
<svg style="left:880px;top:157px" width="21" height="18" viewBox="0 0 21 18"><path d="M0 1H5Q8 1 8 5V11Q8 15 12 15H17" stroke="#4a8ad0" stroke-width="1.6" stroke-dasharray="2 2" fill="none"/><rect x="15" y="12" width="6" height="5" fill="#f5a623"/></svg>
<svg style="left:914px;top:157px" width="21" height="18" viewBox="0 0 21 18"><path d="M0 1H5Q8 1 8 5V11Q8 15 12 15H17" stroke="#4a8ad0" stroke-width="1.8" fill="none"/><rect x="14" y="12" width="6" height="5" fill="#f5a623"/></svg>
<svg style="left:947px;top:155px" width="21" height="21" viewBox="0 0 21 21"><rect x="0.75" y="0.75" width="19" height="19" fill="#fff" stroke="#4a8ad0" stroke-width="1.5"/><path d="M4 6H7V14H10V6H13V14H16" stroke="#4a8ad0" stroke-width="1.2" fill="none"/><rect x="9" y="7" width="2" height="2" fill="#f5a623"/><rect x="9" y="11" width="2" height="2" fill="#f5a623"/></svg>
<div class="a" style="left:977px;top:150px;width:1px;height:26px;background:#d9dce1;"></div>
<div class="a" style="left:981px;top:148px;width:34px;height:28px;background:#f6f7f9;border:1px solid #dadde2;box-sizing:border-box;"></div>
<svg style="left:991px;top:155px" width="14" height="21" viewBox="0 0 14 21"><path d="M1 1V17L5 13L8 20L10 19L7.5 12.5H13Z" fill="#fff" stroke="#333" stroke-width="1.3" stroke-linejoin="round"/></svg>
<svg style="left:1021px;top:154px" width="23" height="25" viewBox="0 0 23 25"><rect x="0" y="0" width="13" height="13" rx="2" fill="#5b95d6"/><rect x="9" y="10" width="13" height="14" rx="2" fill="#f5a623"/><path d="M5 13H14M11 10L14 13L11 16" stroke="#222" stroke-width="1.6" fill="none"/></svg>
<svg style="left:1049px;top:163px" width="6" height="4" viewBox="0 0 6 4"><path d="M0 0H6L3.0 4Z" fill="#1e1e1e"/></svg>
<svg style="left:1068px;top:156px" width="20" height="18" viewBox="0 0 20 18"><rect x="0" y="0" width="6" height="4" fill="#5b95d6"/><rect x="0" y="7" width="6" height="4" fill="#5b95d6"/><rect x="0" y="14" width="6" height="4" fill="#5b95d6"/><path d="M6 2Q10 2 12 8M6 9H12M6 16Q10 16 12 10" stroke="#888" fill="none"/><rect x="11" y="4" width="8" height="9" fill="#f5a623"/></svg>
<div class="a" style="left:1096px;top:150px;width:1px;height:26px;background:#d9dce1;"></div>
<svg style="left:1106px;top:155px" width="23" height="22" viewBox="0 0 23 22"><path d="M3 14A4 4 0 0 1 4 6A6 6 0 0 1 15 5A4 4 0 0 1 19 11V14Z" fill="#5b95d6"/><path d="M8 14V8M6 10L8 8L10 10" stroke="#fff" stroke-width="1.3" fill="none"/><path d="M12 11V19Q17 22 22 19V11Z" fill="#f5a623"/><ellipse cx="17" cy="11" rx="5" ry="2" fill="#f7c04a"/><path d="M12 17Q17 20 22 17V19Q17 22 12 19Z" fill="#f7d04a"/></svg>
<div class="a" style="left:1137px;top:150px;width:1px;height:26px;background:#d9dce1;"></div>
<svg style="left:1147px;top:154px" width="23" height="23" viewBox="0 0 23 23"><path d="M0 3V18Q7 22 14 18V3Z" fill="#4f8ed3"/><ellipse cx="7" cy="3" rx="7" ry="3" fill="#6aa3e0"/><path d="M3 11H9M7 9L9 11L7 13" stroke="#fff" stroke-width="1.3" fill="none"/><circle cx="16" cy="16" r="6" fill="#f5a623"/><rect x="15" y="14" width="2" height="5" fill="#fff"/><rect x="15" y="11.5" width="2" height="1.5" fill="#fff"/></svg>
<div class="a" style="left:1177px;top:150px;width:1px;height:26px;background:#d9dce1;"></div>
<svg style="left:1187px;top:154px" width="22" height="23" viewBox="0 0 22 23"><circle cx="11" cy="11.5" r="8.6" fill="#5896d6"/><rect x="9" y="0.5" width="4" height="4" rx="1" fill="#5896d6" transform="rotate(0.0 11 11.5)"/><rect x="9" y="0.5" width="4" height="4" rx="1" fill="#5896d6" transform="rotate(45.0 11 11.5)"/><rect x="9" y="0.5" width="4" height="4" rx="1" fill="#5896d6" transform="rotate(90.0 11 11.5)"/><rect x="9" y="0.5" width="4" height="4" rx="1" fill="#5896d6" transform="rotate(135.0 11 11.5)"/><rect x="9" y="0.5" width="4" height="4" rx="1" fill="#5896d6" transform="rotate(180.0 11 11.5)"/><rect x="9" y="0.5" width="4" height="4" rx="1" fill="#5896d6" transform="rotate(225.0 11 11.5)"/><rect x="9" y="0.5" width="4" height="4" rx="1" fill="#5896d6" transform="rotate(270.0 11 11.5)"/><rect x="9" y="0.5" width="4" height="4" rx="1" fill="#5896d6" transform="rotate(315.0 11 11.5)"/><circle cx="11" cy="11.5" r="5.2" fill="#fff"/><path d="M14.5 11.5H8M10.5 9L8 11.5L10.5 14" stroke="#5896d6" stroke-width="1.8" fill="none"/></svg>
<svg style="left:1222px;top:153px" width="22" height="23" viewBox="0 0 22 23"><circle cx="11" cy="11.5" r="8.6" fill="#f6a32e"/><rect x="9" y="0.5" width="4" height="4" rx="1" fill="#f6a32e" transform="rotate(0.0 11 11.5)"/><rect x="9" y="0.5" width="4" height="4" rx="1" fill="#f6a32e" transform="rotate(45.0 11 11.5)"/><rect x="9" y="0.5" width="4" height="4" rx="1" fill="#f6a32e" transform="rotate(90.0 11 11.5)"/><rect x="9" y="0.5" width="4" height="4" rx="1" fill="#f6a32e" transform="rotate(135.0 11 11.5)"/><rect x="9" y="0.5" width="4" height="4" rx="1" fill="#f6a32e" transform="rotate(180.0 11 11.5)"/><rect x="9" y="0.5" width="4" height="4" rx="1" fill="#f6a32e" transform="rotate(225.0 11 11.5)"/><rect x="9" y="0.5" width="4" height="4" rx="1" fill="#f6a32e" transform="rotate(270.0 11 11.5)"/><rect x="9" y="0.5" width="4" height="4" rx="1" fill="#f6a32e" transform="rotate(315.0 11 11.5)"/><circle cx="11" cy="11.5" r="5.2" fill="#fff"/><path d="M7.5 11.5H14M11.5 9L14 11.5L11.5 14" stroke="#f6a32e" stroke-width="1.8" fill="none"/></svg>
<svg style="left:1249px;top:163px" width="7" height="4" viewBox="0 0 7 4"><path d="M0 0H7L3.5 4Z" fill="#1e1e1e"/></svg>
<div class="a" style="left:308px;top:182px;width:1000px;height:640px;background:#e9e9de;"></div>
<div class="a" style="left:308px;top:822px;width:1000px;height:45px;background:#e2e8f0;"></div>
<div class="a" style="left:308px;top:823px;width:60px;height:44px;background:#4a7cba;"></div>
<div class="t" style="left:315px;top:836.73px;font-size:14.49px;color:#ffffff;transform:scaleX(0.8969);transform-origin:0 0;">Main</div>
<svg style="left:386px;top:832px" width="24" height="24" viewBox="0 0 24 24"><rect x="0" y="0" width="6" height="6" fill="#f7d84a"/><rect x="1" y="10" width="8" height="12" fill="#8ab4e0" stroke="#5b8fc8"/><rect x="1" y="9" width="8" height="3" fill="#f0a830"/><rect x="14" y="4" width="8" height="11" fill="#8ab4e0" stroke="#5b8fc8"/><rect x="14" y="3" width="8" height="3" fill="#f0a830"/><path d="M8 14L15 8" stroke="#667" stroke-width="1.5"/></svg>
<svg style="left:1281px;top:839px" width="6" height="10" viewBox="0 0 6 10"><path d="M5.5 0.5V9.5L0.5 5Z" fill="none" stroke="#555"/></svg>
<svg style="left:1296px;top:839px" width="6" height="10" viewBox="0 0 6 10"><path d="M0.5 0.5V9.5L5.5 5Z" fill="none" stroke="#555"/></svg>
<div class="a" style="left:1308px;top:105px;width:7px;height:763px;background:#f3f5f8;"></div>
<div class="a" style="left:1308px;top:141px;width:2px;height:727px;background:#dadee3;"></div>
<div class="a" style="left:1308px;top:105px;width:4px;height:36px;background:#e4e9ef;"></div>
<div class="a" style="left:1315px;top:105px;width:397px;height:38px;background:#e0e6ee;"></div>
<div class="t" style="left:1320px;top:116.73px;font-size:14.49px;color:#383838;transform:scaleX(0.8969);transform-origin:0 0;-webkit-text-stroke:0.1px currentColor;">Project Explorer</div>
<svg style="left:1666.5px;top:122px" width="8" height="5" viewBox="0 0 8 5"><path d="M0 0H7.5L3.75 4.5Z" fill="#1e1e1e"/></svg>
<svg style="left:1682px;top:118.5px" width="8" height="12" viewBox="0 0 8 12"><path d="M1.5 0.5H6.5V6H1.5Z" fill="none" stroke="#222"/><path d="M0 6.5H8M4 7V11" stroke="#222" stroke-width="1.2"/><path d="M5 1V6" stroke="#222"/></svg>
<svg style="left:1698px;top:120px" width="9" height="9" viewBox="0 0 9 9"><path d="M1 1L8 8M8 1L1 8" stroke="#1e1e1e" stroke-width="2"/></svg>
<div class="a" style="left:1315px;top:143px;width:397px;height:47px;background:#f5f7fa;"></div>
<svg style="left:1328px;top:157px" width="21" height="19" viewBox="0 0 21 19"><rect x="0.5" y="0.5" width="20" height="18" fill="#fff" stroke="#5f6670"/><rect x="0" y="0" width="21" height="3" fill="#3d7cc9"/><circle cx="4" cy="7" r="1.2" fill="none" stroke="#555"/><circle cx="4" cy="11" r="1.2" fill="none" stroke="#555"/><circle cx="4" cy="15" r="1.2" fill="none" stroke="#555"/><path d="M7 7H18M7 11H18M7 15H18" stroke="#555"/></svg>
<svg style="left:1362px;top:158px" width="22" height="20" viewBox="0 0 22 20"><rect x="0.5" y="0.5" width="20" height="17" fill="#fff" stroke="#5f6670"/><rect x="0" y="0" width="21" height="3" fill="#3d7cc9"/><rect x="13" y="11" width="9" height="9" fill="#f06a2a"/><path d="M15 13L20 18M20 13L15 18" stroke="#fff" stroke-width="1.3"/></svg>
<svg style="left:1395px;top:156px" width="22" height="20" viewBox="0 0 22 20"><path d="M6 0V8M3 5L6 8.5L9 5M16 0V8M13 5L16 8.5L19 5" stroke="#3b78c2" stroke-width="2.2" fill="none"/><rect x="0.5" y="11.5" width="21" height="8" fill="#fff" stroke="#666"/><path d="M4 12V19M8 12V19M12 12V19M16 12V19M1 15.5H21" stroke="#888"/></svg>
<svg style="left:1429px;top:156px" width="22" height="20" viewBox="0 0 22 20"><path d="M6 0V8M3 5L6 8.5L9 5M16 0V8M13 5L16 8.5L19 5" stroke="#3b78c2" stroke-width="2.2" fill="none"/><rect x="0.5" y="11.5" width="21" height="8" fill="#fff" stroke="#666"/><path d="M4 12V19M8 12V19M12 12V19M16 12V19M1 15.5H21" stroke="#888"/></svg>
<svg style="left:1461px;top:157px" width="21" height="20" viewBox="0 0 21 20"><rect x="0.5" y="0.5" width="20" height="18" fill="#fff" stroke="#5f6670"/><rect x="0" y="0" width="21" height="3" fill="#3d7cc9"/><path d="M10 15L13 18L20 10" stroke="#3a9a5a" stroke-width="2.6" fill="none"/></svg>
<svg style="left:1496px;top:157px" width="22" height="19" viewBox="0 0 22 19"><path d="M3 9A8 8 0 0 1 17 5" stroke="#3cb84a" stroke-width="2.6" fill="none"/><path d="M15 1L20 6L14 8Z" fill="#3cb84a"/><path d="M19 10A8 8 0 0 1 5 14" stroke="#3cb84a" stroke-width="2.6" fill="none"/><path d="M7 18L2 13L8 11Z" fill="#3cb84a"/></svg>
<svg style="left:1529px;top:155px" width="22" height="22" viewBox="0 0 22 22"><rect x="0.5" y="0.5" width="21" height="21" fill="#fff" stroke="#5f6670"/><rect x="0" y="0" width="22" height="3" fill="#3d7cc9"/><path d="M9.5 3V22" stroke="#5f6670"/><rect x="11" y="5" width="9" height="7" fill="#eee" stroke="#888"/><path d="M2 10H7M5 8L7 10L5 12" stroke="#3b78c2" fill="none"/></svg>
<svg style="left:1562px;top:155px" width="22" height="22" viewBox="0 0 22 22"><rect x="0.5" y="0.5" width="21" height="21" fill="#fff" stroke="#5f6670"/><rect x="0" y="0" width="22" height="3" fill="#3d7cc9"/><path d="M9.5 3V22" stroke="#5f6670"/><rect x="11" y="5" width="9" height="7" fill="#eee" stroke="#888"/><path d="M1 10H8M3 8L1 10L3 12M6 8L8 10L6 12" stroke="#3b78c2" fill="none"/></svg>
<div class="a" style="left:1593px;top:153px;width:1px;height:27px;background:#d9dce1;"></div>
<svg style="left:1602px;top:155px" width="22" height="22" viewBox="0 0 22 22"><rect x="3.5" y="6.5" width="18" height="15" fill="#f3f4f6" stroke="#b5b9be"/><path d="M4 12H21M4 16H21" stroke="#c5c8cc"/><path d="M2 3H8M5 0V6" stroke="#b5b9be" stroke-width="2"/></svg>
<svg style="left:1636px;top:155px" width="22" height="22" viewBox="0 0 22 22"><path d="M11 1L4 8L1 21M11 1L18 8L21 21M4 8L11 14L18 8M4 8L8 21M18 8L14 21M11 14L8 21M11 14L14 21" stroke="#b5b9be" fill="none"/><circle cx="11" cy="1.5" r="1.5" fill="#aaa"/><circle cx="4" cy="8" r="1.5" fill="#aaa"/><circle cx="18" cy="8" r="1.5" fill="#aaa"/><circle cx="11" cy="14" r="1.5" fill="#aaa"/></svg>
<svg style="left:1670px;top:155px" width="22" height="22" viewBox="0 0 22 22"><rect x="0" y="2" width="15" height="19" rx="3" fill="#5b95d6"/><rect x="3" y="1" width="16" height="20" rx="3" fill="#dfe3e8" stroke="#8a9099"/><path d="M6 6H16M6 9H16M6 12H16M6 15H14" stroke="#8a9099"/><path d="M14 20L20 13" stroke="#555" stroke-width="1.5"/></svg>
<svg style="left:1700px;top:163px" width="6" height="4" viewBox="0 0 6 4"><path d="M0 0H6L3.0 4Z" fill="#1e1e1e"/></svg>
<div class="a" style="left:1315px;top:190px;width:397px;height:42px;background:#ffffff;"></div>
<svg style="left:1323px;top:202px" width="22" height="22" viewBox="0 0 22 22"><circle cx="8" cy="8" r="6.5" fill="none" stroke="#d0d3d7" stroke-width="2"/><path d="M13 13L18 18" stroke="#d0d3d7" stroke-width="3"/></svg>
<div class="t" style="left:1353px;top:205.83px;font-size:13.38px;color:#6d6d6d;transform:scaleX(0.8969);transform-origin:0 0;">Search...</div>
<div class="a" style="left:1315px;top:232px;width:397px;height:2px;background:#d8dce2;"></div>
<div class="a" style="left:1315px;top:234px;width:397px;height:598px;background:#ffffff;"></div>
<svg style="left:1323px;top:244.5px" width="10" height="7" viewBox="0 0 10 7"><path d="M1 1L5 5L9 1" stroke="#333" stroke-width="1.5" fill="none"/></svg>
<svg style="left:1342px;top:240px" width="18" height="18" viewBox="0 0 18 18"><rect x="0.5" y="0.5" width="15" height="13.5" fill="#fff" stroke="#888"/><rect x="0" y="0" width="16" height="3" fill="#3d7cc9"/><path d="M11 15H17M13 13L11 15L13 17" stroke="#3d7cc9" stroke-width="1.3" fill="none"/></svg>
<div class="t" style="left:1364px;top:238.73px;font-size:14.49px;color:#1e1e1e;transform:scaleX(0.8969);transform-origin:0 0;">Data Warehouse.cprj</div>
<div class="a" style="left:1360px;top:259px;width:122px;height:24.5px;background:#dadada;"></div>
<svg style="left:1364px;top:264px" width="16" height="16" viewBox="0 0 16 16"><rect x="0" y="0" width="6" height="2" fill="#3d7cc9"/><path d="M0.5 3V9" stroke="#777" stroke-dasharray="1 1"/><rect x="5.5" y="7.5" width="8" height="8" fill="#e8f0fa" stroke="#3d7cc9"/><rect x="7" y="12" width="5" height="3.5" fill="#fff" stroke="#3d7cc9" stroke-width="0.8"/></svg>
<div class="t" style="left:1386px;top:263.73px;font-size:14.49px;color:#1e1e1e;transform:scaleX(0.8969);transform-origin:0 0;">DataModel.Mdl</div>
<div class="a" style="left:1315px;top:143px;width:1px;height:689px;background:#dde1e6;"></div>
<div class="a" style="left:1315px;top:832px;width:397px;height:35px;background:#e2e8f0;"></div>
<div class="a" style="left:1315px;top:833px;width:122px;height:34px;background:#d3d8de;"></div>
<div class="t" style="left:1322px;top:843.73px;font-size:14.49px;color:#1e1e1e;transform:scaleX(0.8969);transform-origin:0 0;">Project Explorer</div>
<div class="t" style="left:1445px;top:843.73px;font-size:14.49px;color:#1e1e1e;transform:scaleX(0.8969);transform-origin:0 0;">Server Explorer</div>
<div class="t" style="left:1562px;top:843.73px;font-size:14.49px;color:#1e1e1e;transform:scaleX(0.8969);transform-origin:0 0;">Report Properties</div>
<div class="a" style="left:1712px;top:105px;width:7px;height:763px;background:#f5f6f9;"></div>
<div class="a" style="left:1712px;top:105px;width:1px;height:763px;background:#d9dde2;"></div>
<div class="a" style="left:1716px;top:27px;width:1px;height:876px;background:#eceef1;"></div>
<svg style="left:308px;top:182px" width="1000" height="640" viewBox="0 0 1000 640"><g transform="translate(-308,-182)" fill="none" stroke="#78a0a8" stroke-width="1.5"><path d="M637.5 382V454Q637.5 458.5 633 458.5H493Q489 458.5 489 463V539"/><path d="M365 697V534Q365 529.5 369.5 529.5H520Q524.7 529.5 524.7 534V539"/><path d="M605.5 222V392Q605.5 396 609.5 396H831V391" stroke-dasharray="5 4"/><path d="M605.5 222H686Q690 222 690 218Q690 214 684 211" stroke-dasharray="5 4"/><path stroke-width="1.4" d="M613 212V218H649V212" stroke-dasharray="4 3"/><path stroke-width="1.2" d="M664.5 383V391M691 383V393" /><path stroke-width="1.1" d="M486.5 539L489 535L491.5 539M522 539L524.7 535L527.5 539M362.5 697L365 693L367.5 697M635 386L637.5 382L640 386M610.5 216L613 212L615.5 216M662 387L664.5 383L667 387M688.5 387L691 391L693.5 387"/></g></svg>
<div class="a" style="left:578px;top:193px;width:107px;height:20px;background:#8768b9;border-radius:6px;"></div>
<svg style="left:581px;top:196px" width="14" height="14" viewBox="0 0 14 14"><circle cx="7" cy="7" r="6.5" fill="#fff"/><rect x="3" y="4" width="8" height="6" fill="#6aaee0" stroke="#3d86d0" stroke-width="0.6"/><rect x="3" y="4" width="8" height="1.6" fill="#2f7ed0"/></svg>
<div class="t" style="left:596px;top:199.50px;font-size:6.50px;color:#ece6f6;letter-spacing:0.25px;-webkit-text-stroke:0;">Employees</div>
<div class="a" style="left:611px;top:362px;width:107px;height:20px;background:#8768b9;border-radius:6px;"></div>
<svg style="left:614px;top:365px" width="14" height="14" viewBox="0 0 14 14"><circle cx="7" cy="7" r="6.5" fill="#fff"/><rect x="3" y="4" width="8" height="6" fill="#6aaee0" stroke="#3d86d0" stroke-width="0.6"/><rect x="3" y="4" width="8" height="1.6" fill="#2f7ed0"/></svg>
<div class="t" style="left:629px;top:368.50px;font-size:6.50px;color:#ece6f6;letter-spacing:0.25px;-webkit-text-stroke:0;">Orders</div>
<div class="a" style="left:776px;top:371px;width:107px;height:20px;background:#8768b9;border-radius:6px;"></div>
<svg style="left:779px;top:374px" width="14" height="14" viewBox="0 0 14 14"><circle cx="7" cy="7" r="6.5" fill="#fff"/><rect x="3" y="4" width="8" height="6" fill="#6aaee0" stroke="#3d86d0" stroke-width="0.6"/><rect x="3" y="4" width="8" height="1.6" fill="#2f7ed0"/></svg>
<div class="t" style="left:794px;top:377.50px;font-size:6.50px;color:#ece6f6;letter-spacing:0.25px;-webkit-text-stroke:0;">Customers</div>
<div class="a" style="left:454px;top:539px;width:107px;height:20px;background:#8768b9;border-radius:6px;"></div>
<svg style="left:457px;top:542px" width="14" height="14" viewBox="0 0 14 14"><circle cx="7" cy="7" r="6.5" fill="#fff"/><rect x="3" y="4" width="8" height="6" fill="#6aaee0" stroke="#3d86d0" stroke-width="0.6"/><rect x="3" y="4" width="8" height="1.6" fill="#2f7ed0"/></svg>
<div class="t" style="left:472px;top:545.50px;font-size:6.50px;color:#ece6f6;letter-spacing:0.25px;-webkit-text-stroke:0;">Order&nbsp;&nbsp;Details</div>
<div class="a" style="left:312px;top:697px;width:107px;height:20px;background:#8768b9;border-radius:6px;"></div>
<svg style="left:315px;top:700px" width="14" height="14" viewBox="0 0 14 14"><circle cx="7" cy="7" r="6.5" fill="#fff"/><rect x="3" y="4" width="8" height="6" fill="#6aaee0" stroke="#3d86d0" stroke-width="0.6"/><rect x="3" y="4" width="8" height="1.6" fill="#2f7ed0"/></svg>
<div class="t" style="left:330px;top:703.50px;font-size:6.50px;color:#ece6f6;letter-spacing:0.25px;-webkit-text-stroke:0;">Products</div>
<svg style="left:685px;top:512px" width="24" height="36" viewBox="0 0 24 36"><path d="M1.5 1.5V30L8.5 23.5L14 34.5L19 32L13.5 21.5H22.5Z" fill="#fff" stroke="#111" stroke-width="1.8" stroke-linejoin="round"/></svg>
</body></html>
